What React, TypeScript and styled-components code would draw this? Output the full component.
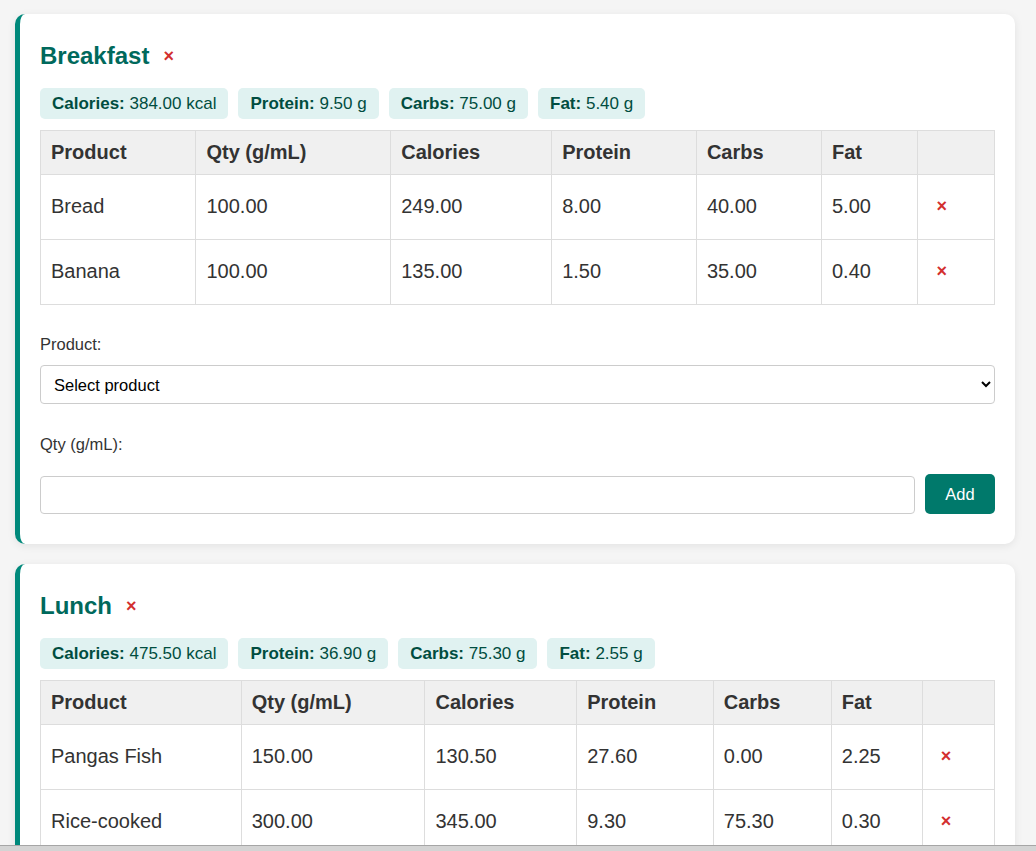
import React from "react";
import styled, { createGlobalStyle } from "styled-components";

const GlobalStyle = createGlobalStyle`
  * { box-sizing: border-box; }
  html, body { margin: 0; padding: 0; background: #f5f5f5; }
  body { font-family: "Liberation Sans", Arial, sans-serif; color: #333; }
`;

const Page = styled.div`
  display: flex;
  flex-direction: column;
  gap: 20px;
  padding: 14px 15px 40px;
`;

const Card = styled.section`
  max-width: 1000px;
  background: #fff;
  border-left: 5px solid #00897b;
  border-radius: 10px;
  box-shadow: 0 2px 8px rgba(0, 0, 0, 0.08);
  padding: 20px 20px 30px 20px;
`;

const HeaderRow = styled.div`
  display: flex;
  align-items: center;
  gap: 6px;
  height: 44px;
`;

const Title = styled.h2`
  margin: 0;
  font-size: 24px;
  font-weight: bold;
  color: #00695c;
`;

const DeleteButton = styled.button`
  background: none;
  border: none;
  color: #d32f2f;
  font-family: "Liberation Sans", Arial, sans-serif;
  font-size: 18px;
  font-weight: bold;
  line-height: 24px;
  padding: 10px 8px;
  cursor: pointer;
`;

const Chips = styled.div`
  display: flex;
  flex-wrap: wrap;
  gap: 10px;
  margin-top: 10px;
`;

const Chip = styled.span`
  background: #e0f2f1;
  color: #004d40;
  padding: 6px 12px;
  border-radius: 5px;
  font-size: 17px;
  line-height: 19px;
`;

const Table = styled.table`
  width: 100%;
  margin-top: 11px;
  border-collapse: collapse;
  font-size: 20px;
`;

const Th = styled.th`
  background: #f0f0f0;
  font-weight: bold;
  text-align: left;
  padding: 10px;
  border: 1px solid #ddd;
  color: #333;
`;

const Td = styled.td`
  padding: 9px 10px 11px;
  border: 1px solid #ddd;
  color: #333;
  vertical-align: middle;
`;

const Form = styled.div`
  margin-top: 30px;
`;

const Label = styled.label<{ $gap: number }>`
  display: block;
  font-size: 16.5px;
  color: #333;
  margin-bottom: ${(p) => p.$gap}px;
`;

const Select = styled.select`
  width: 100%;
  height: 39px;
  padding: 0 9px;
  border: 1px solid #ccc;
  border-radius: 4px;
  background: #fff;
  color: #000;
  font-family: "Liberation Sans", Arial, sans-serif;
  font-size: 16.5px;
`;

const Group = styled.div`
  margin-top: 31px;
`;

const InputRow = styled.div`
  display: flex;
  align-items: flex-end;
  gap: 10px;
`;

const Input = styled.input`
  flex: 1;
  height: 38px;
  padding: 0 10px;
  border: 1px solid #ccc;
  border-radius: 4px;
  font-family: "Liberation Sans", Arial, sans-serif;
  font-size: 16.5px;
`;

const AddButton = styled.button`
  width: 70px;
  height: 40px;
  background: #00796b;
  color: #fff;
  border: none;
  border-radius: 5px;
  font-family: "Liberation Sans", Arial, sans-serif;
  font-size: 16.5px;
  cursor: pointer;
`;

const BottomBar = styled.div`
  position: fixed;
  left: 0;
  right: 0;
  bottom: 0;
  height: 6px;
  background: #d4d4d4;
  border-top: 1px solid #a6a6a6;
`;

type Row = [string, string, string, string, string, string];

interface Meal {
  name: string;
  totals: [string, string][];
  rows: Row[];
}

const meals: Meal[] = [
  {
    name: "Breakfast",
    totals: [
      ["Calories", "384.00 kcal"],
      ["Protein", "9.50 g"],
      ["Carbs", "75.00 g"],
      ["Fat", "5.40 g"],
    ],
    rows: [
      ["Bread", "100.00", "249.00", "8.00", "40.00", "5.00"],
      ["Banana", "100.00", "135.00", "1.50", "35.00", "0.40"],
    ],
  },
  {
    name: "Lunch",
    totals: [
      ["Calories", "475.50 kcal"],
      ["Protein", "36.90 g"],
      ["Carbs", "75.30 g"],
      ["Fat", "2.55 g"],
    ],
    rows: [
      ["Pangas Fish", "150.00", "130.50", "27.60", "0.00", "2.25"],
      ["Rice-cooked", "300.00", "345.00", "9.30", "75.30", "0.30"],
    ],
  },
];

const headers = ["Product", "Qty (g/mL)", "Calories", "Protein", "Carbs", "Fat", ""];

function MealCard({ meal }: { meal: Meal }) {
  return (
    <Card>
      <HeaderRow>
        <Title>{meal.name}</Title>
        <DeleteButton>×</DeleteButton>
      </HeaderRow>
      <Chips>
        {meal.totals.map(([k, v]) => (
          <Chip key={k}>
            <strong>{k}:</strong> {v}
          </Chip>
        ))}
      </Chips>
      <Table>
        <thead>
          <tr>
            {headers.map((h, i) => (
              <Th key={i}>{h}</Th>
            ))}
          </tr>
        </thead>
        <tbody>
          {meal.rows.map((r) => (
            <tr key={r[0]}>
              {r.map((c, i) => (
                <Td key={i}>{c}</Td>
              ))}
              <Td>
                <DeleteButton>×</DeleteButton>
              </Td>
            </tr>
          ))}
        </tbody>
      </Table>
      <Form>
        <Label $gap={11}>Product:</Label>
        <Select defaultValue="">
          <option value="">Select product</option>
          <option value="bread">Bread</option>
          <option value="banana">Banana</option>
        </Select>
        <Group>
          <Label $gap={20}>Qty (g/mL):</Label>
          <InputRow>
            <Input type="number" />
            <AddButton>Add</AddButton>
          </InputRow>
        </Group>
      </Form>
    </Card>
  );
}

export default function App() {
  return (
    <>
      <GlobalStyle />
      <Page>
        {meals.map((m) => (
          <MealCard key={m.name} meal={m} />
        ))}
      </Page>
      <BottomBar />
    </>
  );
}
